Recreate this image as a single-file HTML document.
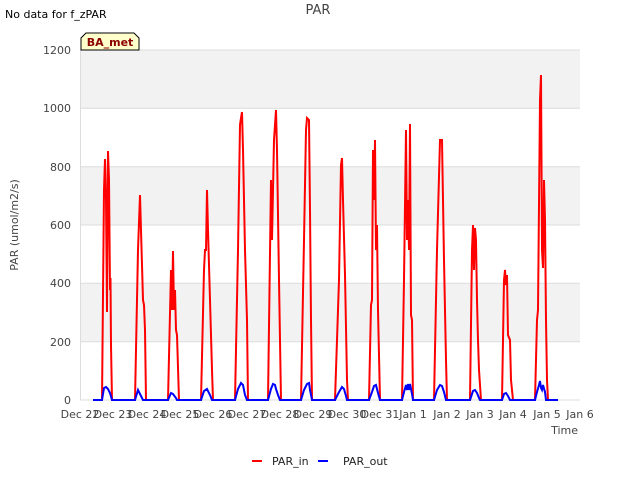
<!DOCTYPE html>
<html><head><style>body{margin:0;background:#fff}svg{display:block;font-family:"DejaVu Sans","Liberation Sans",sans-serif}</style></head><body>
<svg width="640" height="480" xmlns="http://www.w3.org/2000/svg">
<rect width="640" height="480" fill="#fff"/>
<text x="5" y="18" font-size="11" fill="#000">No data for f_zPAR</text>
<text x="318" y="14" font-size="13" fill="#444" text-anchor="middle">PAR</text>
<rect x="80" y="50" width="500" height="350" fill="#fff"/>
<rect x="80" y="50" width="500" height="58.3" fill="#f2f2f2"/>
<rect x="80" y="166.7" width="500" height="58.3" fill="#f2f2f2"/>
<rect x="80" y="283.3" width="500" height="58.4" fill="#f2f2f2"/>
<g stroke="#dcdcdc" stroke-width="1">
<line x1="80" y1="50" x2="580" y2="50"/><line x1="80" y1="108.3" x2="580" y2="108.3"/><line x1="80" y1="166.7" x2="580" y2="166.7"/><line x1="80" y1="225" x2="580" y2="225"/><line x1="80" y1="283.3" x2="580" y2="283.3"/><line x1="80" y1="341.7" x2="580" y2="341.7"/><line x1="80" y1="400" x2="580" y2="400"/>
<line x1="80.5" y1="50" x2="80.5" y2="400"/>
</g>
<g font-size="11" fill="#444" text-anchor="end">
<text x="71" y="54">1200</text><text x="71" y="112">1000</text><text x="71" y="171">800</text><text x="71" y="229">600</text><text x="71" y="287">400</text><text x="71" y="346">200</text><text x="71" y="404">0</text>
</g>
<g font-size="11" fill="#444" text-anchor="middle">
<text x="80" y="418">Dec 22</text><text x="113" y="418">Dec 23</text><text x="147" y="418">Dec 24</text><text x="180" y="418">Dec 25</text><text x="213" y="418">Dec 26</text><text x="247" y="418">Dec 27</text><text x="280" y="418">Dec 28</text><text x="313" y="418">Dec 29</text><text x="347" y="418">Dec 30</text><text x="380" y="418">Dec 31</text><text x="413" y="418">Jan 1</text><text x="447" y="418">Jan 2</text><text x="480" y="418">Jan 3</text><text x="513" y="418">Jan 4</text><text x="547" y="418">Jan 5</text><text x="580" y="418">Jan 6</text>
</g>
<text x="578" y="434" font-size="11" fill="#444" text-anchor="end">Time</text>
<text transform="translate(18,225) rotate(-90)" font-size="11" fill="#444" text-anchor="middle">PAR (umol/m2/s)</text>
<polyline fill="none" stroke="#ff0000" stroke-width="2" points="93,400 102,400 104,190 105,159 106,200 107,312 108,151 109,180 110,290 110.5,278 111,345 112,400 135,400 138,250 140,195 141,230 143,300 144,305 145,330 146,400 168,400 171,270 172,310 173,251 174,310 175,290 176,330 177,335 179,400 201,400 204,270 205,250 206,250 207,190 208,230 210,300 212,370 213,400 235,400 238,250 240,125 241,118 242,112 243,150 245,250 247,320 248,400 268,400 271,180 272,240 274,140 276,110 277,150 279,280 281,400 301,400 304,240 306,130 307,118 309,120 310,210 311,320 312,400 335,400 339,280 341,165 342,158 343,200 345,275 347,380 348,400 369,400 371,305 372,300 373,150 374,200 375,140 376,250 377,225 378,310 380,400 402,400 404,280 406,130 407,240 408,200 409,250 410,124 411,315 412,320 413,400 434,400 437,250 440,140 442,140 444,260 446,360 447,400 470,400 472,250 473,225 474,270 475,228 476,240 477,300 478,340 479,370 481,400 502,400 504,280 505,270 506,285 507,275 508,335 510,340 511,380 513,400 535,400 537,320 538,310 540,100 541,75 542,250 543,268 544,180 545,220 546,320 547,380 548,400 558,400"/>
<polyline fill="none" stroke="#0000ff" stroke-width="2" points="93,400 102,400 104,388 106,387 108,389 110,393 112,400 135,400 138,390 140,394 143,400 168,400 171,393 173,394 176,398 177,400 201,400 204,391 207,389 210,395 212,400 235,400 238,389 241,383 243,385 245,395 247,400 268,400 271,389 273,384 275,385 276,389 278,395 280,400 301,400 304,390 307,384 309,383 310,390 312,400 335,400 339,392 342,387 344,389 346,396 347,400 369,400 372,392 374,386 376,385 378,393 380,400 402,400 404,392 406,385 407,390 408,384 409,390 410,384 412,394 413,400 434,400 437,390 440,385 442,386 444,392 446,400 470,400 473,391 475,390 477,393 479,398 480,400 502,400 504,394 506,393 508,396 510,400 535,400 537,392 539,385 540,381 541,388 542,390 543,385 545,392 546,400 558,400"/>
<path d="M81,50 L81,38 L86,33 L134,33 L139,38 L139,50 Z" fill="#ffffcc" stroke="#000" stroke-width="1"/>
<text x="110" y="46" font-size="11" font-weight="bold" fill="#8b0000" text-anchor="middle">BA_met</text>
<line x1="252" y1="461" x2="262" y2="461" stroke="#ff0000" stroke-width="2"/>
<text x="272" y="465" font-size="11" fill="#222">PAR_in</text>
<line x1="318" y1="461" x2="328" y2="461" stroke="#0000ff" stroke-width="2"/>
<text x="343" y="465" font-size="11" fill="#222">PAR_out</text>
</svg>
</body></html>
